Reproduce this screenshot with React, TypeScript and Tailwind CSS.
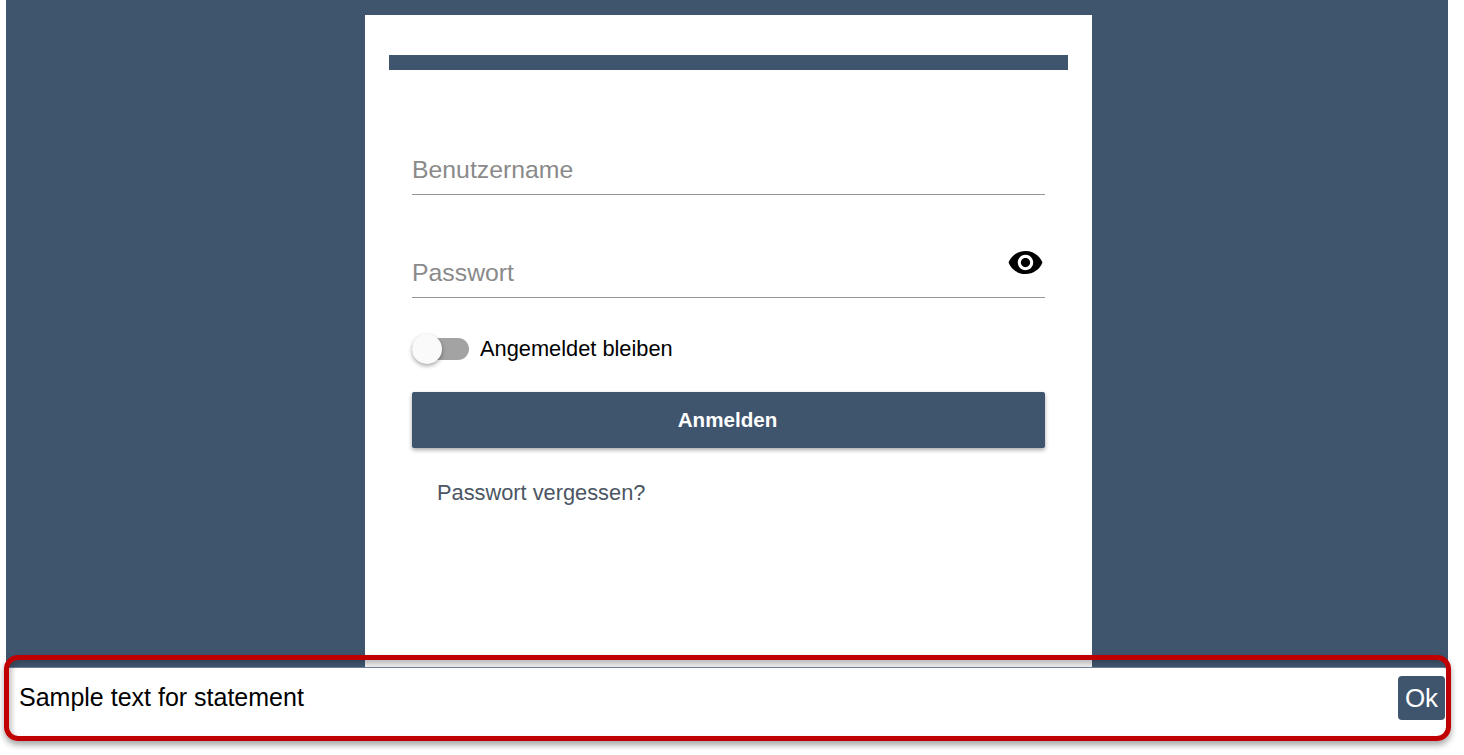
const App = () => {
  return (
    <div className="relative h-[755px] w-[1464px] overflow-hidden bg-white font-['Liberation_Sans',Arial,sans-serif]">
      <div className="ml-[6px] flex h-[668px] w-[1442px] justify-center bg-[#3f556e] pt-[15px]">
        <div className="ml-[3px] flex h-[653px] w-[727px] flex-col bg-white">
          <div className="flex-1 px-[24px] pt-[40px]">
            <div className="h-[15px] w-[679px] bg-[#3f556e]" />
            <div className="ml-[23px] w-[633px]">
              {/* Username */}
              <div className="mt-[83px] h-[42px] border-b border-[#949494] pt-[2px] text-[24.8px] leading-[29px] text-[#8a8a8a]">
                Benutzername
              </div>
              {/* Password */}
              <div className="relative mt-[61px] h-[42px] border-b border-[#949494] pt-[2px] text-[24.8px] leading-[29px] text-[#8a8a8a]">
                Passwort
                <svg
                  className="absolute right-[1px] top-[-12px] h-[37px] w-[37px]"
                  viewBox="0 0 24 24"
                  fill="#000"
                >
                  <path d="M12 4.5C7 4.5 2.73 7.61 1 12c1.73 4.39 6 7.5 11 7.5s9.27-3.11 11-7.5c-1.73-4.39-6-7.5-11-7.5zM12 17c-2.76 0-5-2.24-5-5s2.24-5 5-5 5 2.24 5 5-2.240 5-5 5zm0-8c-1.660 0-3 1.340-3 3s1.340 3 3 3 3-1.340 3-3-1.340-3-3-3z" />
                </svg>
              </div>
              {/* Remember me */}
              <div className="mt-[33px] flex h-[36px] items-center">
                <div className="relative h-[22px] w-[57px] rounded-full bg-[#a3a3a3]">
                  <div className="absolute left-0 top-[-4px] h-[30px] w-[30px] rounded-full bg-[#fafafa] shadow-[0_2px_4px_rgba(0,0,0,0.35)]" />
                </div>
                <span className="ml-[11px] text-[21.8px] text-black">Angemeldet bleiben</span>
              </div>
              <button className="mt-[25px] flex h-[56px] w-full items-center justify-center rounded-[2px] bg-[#3f556e] pr-[2px] text-[20.6px] font-bold text-white shadow-[0_2px_4px_rgba(0,0,0,0.35)]">
                Anmelden
              </button>
              <div className="mt-[33px] pl-[25px] text-[21.8px] leading-[24px] text-[#4b5563]">
                Passwort vergessen?
              </div>
            </div>
          </div>
          <div className="h-[8px] bg-[#ececec]" />
        </div>
      </div>

      {/* Statement banner */}
      <div className="absolute left-[6px] top-[667px] flex h-[72px] w-[1442px] items-start justify-between border-t border-[#6f8196] bg-white pl-[13px] pr-[3px]">
        <span className="mt-[14px] text-[25px] leading-[30px] text-black">Sample text for statement</span>
        <button className="mt-[8px] h-[44px] w-[47px] rounded-[4px] bg-[#3f556e] text-[26px] leading-[30px] text-white">
          Ok
        </button>
      </div>
      <div className="absolute left-[4px] top-[655px] h-[86px] w-[1447px] rounded-[14px] border-[5px] border-[#c00000] shadow-[0_4px_6px_rgba(0,0,0,0.35),inset_3px_3px_5px_rgba(0,0,0,0.22)]" />
    </div>
  );
};

export default App;
